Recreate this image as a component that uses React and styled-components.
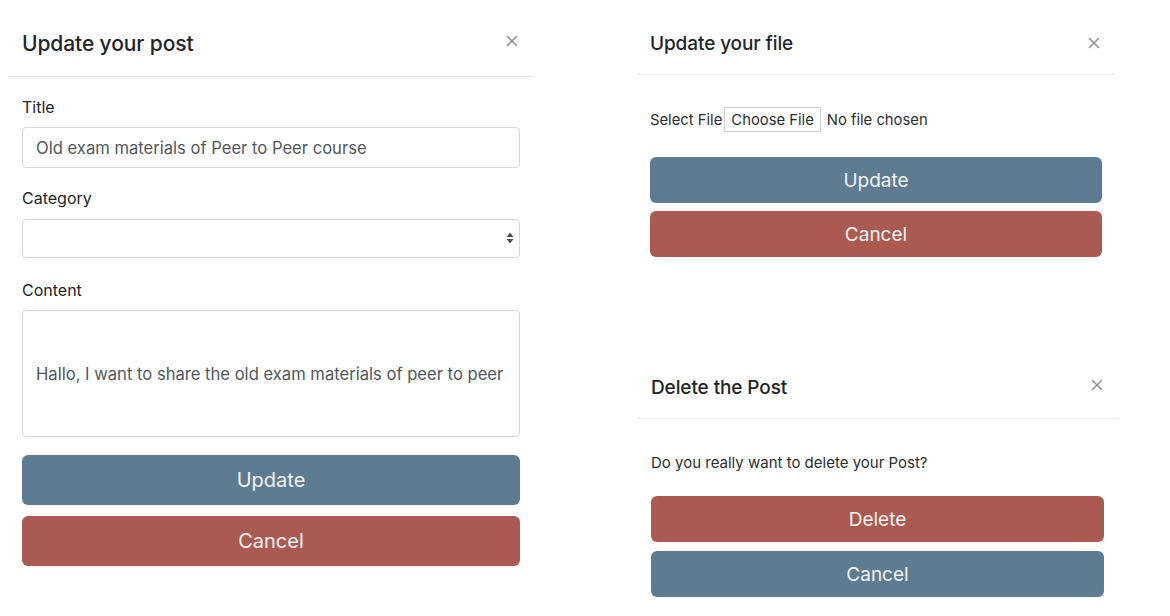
import React from "react";
import styled, { createGlobalStyle } from "styled-components";

const GlobalStyle = createGlobalStyle`
  body {
    margin: 0;
    background: #ffffff;
    font-family: Inter, "Liberation Sans", sans-serif;
    color: #212529;
  }
`;

const Page = styled.div`
  display: flex;
  align-items: flex-start;
  gap: 105px;
  padding-left: 8px;
`;

const Modal = styled.div`
  width: ${(p) => p.$w}px;
  padding-top: ${(p) => p.$top || 0}px;
`;

const Column = styled.div`
  display: flex;
  flex-direction: column;
  gap: 99px;
  padding-top: 12px;
`;

const Header = styled.div`
  display: flex;
  align-items: center;
  justify-content: space-between;
  height: ${(p) => p.$h}px;
  padding: 0 ${(p) => p.$right}px 0 ${(p) => p.$left}px;
  border-bottom: 1px solid #e5e8eb;
`;

const Title = styled.h5`
  margin: 0;
  font-size: ${(p) => p.$size}px;
  font-weight: 500;
  color: #212529;
  letter-spacing: -0.1px;
`;

const CloseBtn = styled.button`
  border: 0;
  background: none;
  padding: 0;
  width: 12px;
  height: 12px;
  display: flex;
  cursor: pointer;
  margin-top: ${(p) => p.$dy || 0}px;
`;

const Body = styled.div`
  padding: ${(p) => p.$top}px ${(p) => p.$right}px 0 ${(p) => p.$left}px;
  display: flex;
  flex-direction: column;
`;

const Label = styled.label`
  display: block;
  font-size: 16px;
  line-height: 24px;
  margin-bottom: 8px;
`;

const Group = styled.div`
  margin-bottom: ${(p) => p.$mb || 18}px;
`;

const Input = styled.input`
  box-sizing: border-box;
  width: 100%;
  height: ${(p) => p.$h || 41}px;
  border: 1px solid #d3d8dd;
  border-radius: 4px;
  padding: 0 13px;
  font-family: inherit;
  font-size: 16.6px;
  color: #51575d;
  background: #fff;
  outline: none;
`;

const SelectWrap = styled.div`
  position: relative;
  padding-top: 1px;
`;

const Select = styled.select`
  box-sizing: border-box;
  display: block;
  width: 100%;
  height: 39px;
  border: 1px solid #d3d8dd;
  border-radius: 4px;
  background: #fff;
  appearance: none;
  font-family: inherit;
  font-size: 16px;
`;

const Arrows = styled.svg`
  position: absolute;
  right: 6px;
  top: 14px;
  pointer-events: none;
`;

const Button = styled.button`
  box-sizing: border-box;
  width: 100%;
  height: ${(p) => p.$h}px;
  border: 0;
  border-radius: 6px;
  background: ${(p) => (p.$danger ? "#aa5a50" : "#5d7c91")};
  color: #f2f2f2;
  font-family: inherit;
  font-size: ${(p) => p.$size}px;
  margin-top: ${(p) => p.$mt}px;
  cursor: pointer;
`;

const FileRow = styled.div`
  display: flex;
  align-items: center;
  height: 25px;
  font-size: 14.8px;
  color: #2b2f33;
`;

const ChooseBtn = styled.span`
  box-sizing: border-box;
  display: inline-flex;
  align-items: center;
  height: 25px;
  padding: 0 6px;
  margin: 0 6px 0 2px;
  border: 1px solid #cfcfcf;
  background: #fff;
`;

const Text = styled.p`
  margin: 0;
  font-size: 15px;
  line-height: 20px;
  color: #2b2f33;
`;

const CloseIcon = () => (
  <svg width="12" height="12" viewBox="0 0 12 12">
    <path d="M1.5 1.5 L10.5 10.5 M10.5 1.5 L1.5 10.5" stroke="#8f9397" strokeWidth="1.6" strokeLinecap="round" />
  </svg>
);

export default function App() {
  return (
    <>
      <GlobalStyle />
      <Page>
        <Modal $w={525} $top={10}>
          <Header $h={66} $left={14} $right={15}>
            <Title $size={21}>Update your post</Title>
            <CloseBtn $dy={-5}><CloseIcon /></CloseBtn>
          </Header>
          <Body $top={18} $left={14} $right={13}>
            <Group>
              <Label>Title</Label>
              <Input defaultValue="Old exam materials of Peer to Peer course" />
            </Group>
            <Group $mb={20}>
              <Label>Category</Label>
              <SelectWrap>
                <Select />
                <Arrows width="8" height="12" viewBox="0 0 8 12">
                  <path d="M4 0.5 L7.5 5 L0.5 5 Z M4 11.5 L7.5 7 L0.5 7 Z" fill="#4a4f54" />
                </Arrows>
              </SelectWrap>
            </Group>
            <Label>Content</Label>
            <Input $h={127} defaultValue="Hallo, I want to share the old exam materials of peer to peer" />
            <Button $h={50} $size={20} $mt={18}>Update</Button>
            <Button $h={50} $size={20} $mt={11} $danger>Cancel</Button>
          </Body>
        </Modal>
        <Column>
          <Modal $w={476}>
            <Header $h={62} $left={12} $right={14}>
              <Title $size={19}>Update your file</Title>
              <CloseBtn><CloseIcon /></CloseBtn>
            </Header>
            <Body $top={32} $left={12} $right={12}>
              <FileRow>
                Select File
                <ChooseBtn>Choose File</ChooseBtn>
                No file chosen
              </FileRow>
              <Button $h={46} $size={19} $mt={25}>Update</Button>
              <Button $h={46} $size={19} $mt={8} $danger>Cancel</Button>
            </Body>
          </Modal>
          <Modal $w={479}>
            <Header $h={62} $left={13} $right={14}>
              <Title $size={19}>Delete the Post</Title>
              <CloseBtn $dy={-4}><CloseIcon /></CloseBtn>
            </Header>
            <Body $top={34} $left={13} $right={13}>
              <Text>Do you really want to delete your Post?</Text>
              <Button $h={46} $size={19} $mt={23} $danger>Delete</Button>
              <Button $h={46} $size={19} $mt={9}>Cancel</Button>
            </Body>
          </Modal>
        </Column>
      </Page>
    </>
  );
}
